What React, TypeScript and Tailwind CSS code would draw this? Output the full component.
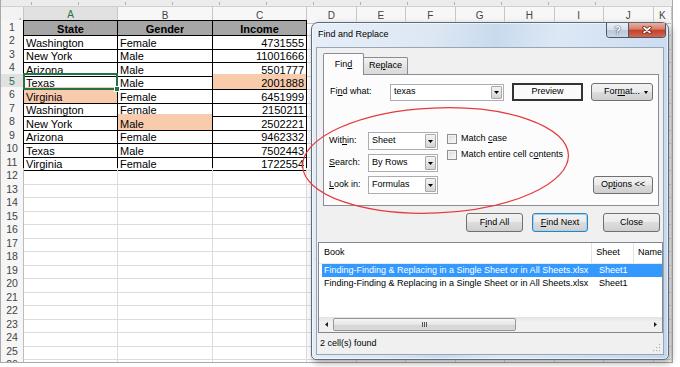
import React from "react";

const SHEET_GRID = "grid grid-cols-[23px_94px_95px_94px_repeat(7,49.5px)_1fr]";

const data: [string, string, string][] = [
  ["State", "Gender", "Income"],
  ["Washington", "Female", "4731555"],
  ["New York", "Male", "11001666"],
  ["Arizona", "Male", "5501777"],
  ["Texas", "Male", "2001888"],
  ["Virginia", "Female", "6451999"],
  ["Washington", "Female", "2150211"],
  ["New York", "Male", "2502221"],
  ["Arizona", "Female", "9462332"],
  ["Texas", "Male", "7502443"],
  ["Virginia", "Female", "1722554"],
];
const highlights = new Set(["5-2", "6-0", "8-1"]);
const colLetters = ["A", "B", "C", "D", "E", "F", "G", "H", "I", "J", "K"];

function U({ children }: { children: React.ReactNode }) {
  return <span className="underline underline-offset-1">{children}</span>;
}

function SheetRow({ r }: { r: number }) {
  const inTable = r <= 11;
  const isHead = r === 1;
  const row = inTable ? data[r - 1] : ["", "", ""];
  return (
    <div className={`${SHEET_GRID} h-[13.5px]`}>
      <div
        className={`flex items-center justify-center text-[10.5px] border-b border-b-[#d6d6d6] border-r ${
          inTable ? "border-r-black" : "border-r-[#bdbdbd]"
        } ${r === 5 ? "bg-[#e1e1e1] text-[#217346]" : "bg-[#f6f6f6] text-[#444]"}`}
      >
        {r}
      </div>
      {colLetters.map((_, c) => {
        const table = inTable && c < 3;
        const text = c < 3 ? row[c] : "";
        const hl = highlights.has(`${r}-${c}`);
        const selected = r === 5 && c === 0;
        let cls =
          "relative flex items-end leading-[12px] text-[11px] whitespace-nowrap border-r border-b " +
          (table ? "border-black " : "border-[#dcdcdc] ");
        if (isHead && c < 3) cls += "bg-[#a6a6a6] font-bold justify-center border-t border-t-black ";
        else if (c === 2 && inTable) cls += "justify-end pr-[2px] ";
        else cls += "pl-[2px] ";
        if (hl) cls += "bg-[#f8cbad] ";
        return (
          <div key={c} className={cls}>
            <span className="overflow-hidden">{text}</span>
            {selected && (
              <div className="absolute -left-px -top-px -right-px -bottom-px border-2 border-[#217346] z-10">
                <div className="absolute -right-[4px] -bottom-[4px] w-[6px] h-[6px] bg-[#217346] border border-white" />
              </div>
            )}
          </div>
        );
      })}
    </div>
  );
}

function Sheet() {
  const rows = Array.from({ length: 26 }, (_, i) => i + 1);
  return (
    <div className="w-[673px] h-[363px] overflow-hidden border-l border-r border-b border-[#a9a9a9] bg-white">
      <div className="h-[7px] bg-[#ececec] border-b border-[#d0d0d0] flex items-end gap-[46px] pl-[30px]">
        <div className="w-px h-[3px] bg-[#b0b0b0] mb-[1px]" />
        <div className="w-px h-[3px] bg-[#b0b0b0] mb-[1px]" />
        <div className="w-px h-[3px] bg-[#b0b0b0] mb-[1px]" />
        <div className="w-px h-[3px] bg-[#b0b0b0] mb-[1px]" />
        <div className="w-px h-[3px] bg-[#b0b0b0] mb-[1px]" />
        <div className="w-px h-[3px] bg-[#b0b0b0] mb-[1px]" />
        <div className="w-px h-[3px] bg-[#b0b0b0] mb-[1px]" />
        <div className="w-px h-[3px] bg-[#b0b0b0] mb-[1px]" />
        <div className="w-px h-[3px] bg-[#b0b0b0] mb-[1px]" />
        <div className="w-px h-[3px] bg-[#b0b0b0] mb-[1px]" />
        <div className="w-px h-[3px] bg-[#b0b0b0] mb-[1px]" />
        <div className="w-px h-[3px] bg-[#b0b0b0] mb-[1px]" />
        <div className="w-px h-[3px] bg-[#b0b0b0] mb-[1px]" />
      </div>
      <div className={`${SHEET_GRID} h-[12.5px]`}>
        <div className="bg-[#f3f3f3] border-r border-b border-[#c6c6c6] flex items-end justify-end pr-[2px] pb-[1px]">
          <svg width="5" height="5" viewBox="0 0 5 5">
            <path d="M5 0V5H0z" fill="#c4c4c4" />
          </svg>
        </div>
        {colLetters.map((l, i) =>
          i === 0 ? (
            <div
              key={l}
              className="flex items-center justify-center text-[10px] bg-[#e1e1e1] text-[#217346] border-r border-r-[#c6c6c6] border-b-2 border-b-[#217346]"
            >
              {l}
            </div>
          ) : (
            <div
              key={l}
              className="flex items-center justify-center text-[10px] bg-[#f7f7f7] text-[#444] border-r border-b border-[#c6c6c6]"
            >
              {l}
            </div>
          )
        )}
      </div>
      {rows.map((r) => (
        <SheetRow key={r} r={r} />
      ))}
    </div>
  );
}

function DropArrow() {
  return (
    <svg width="5" height="3" viewBox="0 0 5 3">
      <path d="M0 0h5L2.5 3z" fill="#000" />
    </svg>
  );
}

function DropBtn() {
  return (
    <div className="w-[11px] m-px flex items-center justify-center rounded-[1px] border border-[#a9a9a9] bg-[linear-gradient(#f3f3f3,#e6e6e6_50%,#d3d3d3)]">
      <DropArrow />
    </div>
  );
}

function Select({ value, className }: { value: string; className: string }) {
  return (
    <div className={`flex items-stretch border border-[#abadb3] bg-white ${className}`}>
      <div className="flex-1 flex items-center pl-[3px] text-[9px]">{value}</div>
      <DropBtn />
    </div>
  );
}

const BTN =
  "flex items-center justify-center text-[9px] rounded-[3px] border bg-[linear-gradient(#f2f2f2_0%,#ebebeb_50%,#dddddd_50%,#cfcfcf_100%)]";

function Checkbox({ children }: { children: React.ReactNode }) {
  return (
    <div className="h-[16px] flex items-center gap-[4px] text-[9px]">
      <div className="w-[10px] h-[10px] border border-[#8e8f8f] bg-[linear-gradient(135deg,#d9d9d9,#fbfbfb)] shadow-[inset_0_0_0_1px_#f2f2f2]" />
      <span>{children}</span>
    </div>
  );
}

function Dialog() {
  return (
    <div className="absolute left-[311px] top-[22px] w-[358px] h-[338px] rounded-t-[7px] rounded-b-[5px] border border-[#5d6b7c] bg-[linear-gradient(100deg,#e6eef8_0%,#dde7f3_30%,#c9daee_45%,#dde8f5_60%,#c3d7ee_100%)] shadow-[inset_0_0_0_1px_rgba(255,255,255,0.55),2px_3px_7px_rgba(0,0,0,0.35)] flex flex-col">
      {/* title bar */}
      <div className="h-[24px] relative flex items-center pl-[6px]">
        <span className="text-[9px] text-black">Find and Replace</span>
        <div className="absolute right-[2px] top-0 h-[15px] flex border border-t-0 border-[#4a596d] rounded-b-[4px] overflow-hidden">
          <div className="w-[22px] flex items-center justify-center bg-[linear-gradient(#e9eff6,#d3deea_50%,#b9c9db_51%,#c9d6e4)] border-r border-[#4a596d]">
            <span className="text-[11px] font-bold leading-none text-white [text-shadow:0_0_1px_#4d5a6a,0_0_1px_#4d5a6a,0_0_1px_#4d5a6a]">
              ?
            </span>
          </div>
          <div className="w-[36px] flex items-center justify-center bg-[linear-gradient(#eab1a3,#d67c66_45%,#c4402a_50%,#d4654c)]">
            <svg width="10" height="8" viewBox="0 0 10 8">
              <path d="M2 1.5L8 6.5M8 1.5L2 6.5" stroke="#5a1d14" strokeWidth="3.2" strokeLinecap="round" />
              <path d="M2 1.5L8 6.5M8 1.5L2 6.5" stroke="#fff" strokeWidth="1.7" strokeLinecap="round" />
            </svg>
          </div>
        </div>
      </div>
      {/* client */}
      <div className="mx-[4px] h-[308px] border border-[#97a6b7] bg-[#f0f0f0] flex flex-col">
        <div className="pt-[5px] pl-[6px] pr-[4px]">
          <div className="h-[21px] flex items-end">
            <div className="relative z-10 w-[41px] h-[22px] -mb-px bg-[#fcfcfc] border border-b-0 border-[#898c95] rounded-t-[2px] flex items-center justify-center text-[9px]">
              Fin<U>d</U>
            </div>
            <div className="w-[44px] h-[17px] border border-l-0 border-b-0 border-[#898c95] rounded-tr-[2px] bg-[linear-gradient(#f3f3f3,#e3e3e3_50%,#d9d9d9)] flex items-center justify-center text-[9px]">
              Re<U>p</U>lace
            </div>
          </div>
          <div className="h-[132px] border border-[#898c95] bg-[#fcfcfc] flex flex-col">
            {/* Find what row */}
            <div className="mt-[8px] h-[18px] flex items-center pl-[6px]">
              <div className="w-[60px] text-[9px]">
                Fi<U>n</U>d what:
              </div>
              <Select value="texas" className="w-[114px] h-[17px]" />
              <div className="ml-[8px] w-[71px] h-[18px] border-2 border-[#333] bg-[#fafafa] flex items-center justify-center text-[9px]">
                Preview
              </div>
              <div className={`${BTN} ml-[8px] w-[62px] h-[18px] border-[#707070] relative`}>
                <span>
                  For<U>m</U>at...
                </span>
                <span className="absolute right-[4px] top-[7px]">
                  <svg width="4" height="3" viewBox="0 0 4 3">
                    <path d="M0 0h4L2 3z" fill="#000" />
                  </svg>
                </span>
              </div>
            </div>
            {/* options */}
            <div className="mt-[31px] flex items-start pl-[5px] pr-[5px]">
              <div className="grid grid-cols-[39px_70px] gap-y-[4px] text-[9px]">
                <div className="h-[18px] flex items-center">
                  Wit<U>h</U>in:
                </div>
                <Select value="Sheet" className="h-[18px]" />
                <div className="h-[18px] flex items-center">
                  <U>S</U>earch:
                </div>
                <Select value="By Rows" className="h-[18px]" />
                <div className="h-[18px] flex items-center">
                  <U>L</U>ook in:
                </div>
                <Select value="Formulas" className="h-[18px]" />
              </div>
              <div className="ml-[9px] -mt-px flex flex-col">
                <Checkbox>
                  Match <U>c</U>ase
                </Checkbox>
                <Checkbox>
                  Match entire cell c<U>o</U>ntents
                </Checkbox>
              </div>
              <div className={`${BTN} ml-auto mt-[44px] w-[60px] h-[18px] border-[#707070]`}>
                Op<U>t</U>ions &lt;&lt;
              </div>
            </div>
          </div>
        </div>
        {/* action buttons */}
        <div className="mt-[7px] h-[19px] flex justify-end pr-[3px]">
          <div className={`${BTN} w-[57px] border-[#707070]`}>
            F<U>i</U>nd All
          </div>
          <div className={`${BTN} ml-[9px] w-[56px] border-[#3c7fb1] shadow-[inset_0_0_0_1px_#9fd3f3]`}>
            <U>F</U>ind Next
          </div>
          <div className={`${BTN} ml-[15px] w-[57px] border-[#707070]`}>Close</div>
        </div>
        {/* results list */}
        <div className="mt-[10px] ml-px h-[91px] border border-[#828790] bg-white flex flex-col overflow-hidden">
          <div className="h-[21px] flex items-center text-[9px] border-b border-[#eaeaea] bg-white">
            <div className="w-[276px] h-full flex items-center pl-[5px] border-r border-[#e3e3e3]">Book</div>
            <div className="w-[42px] h-full flex items-center pl-[4px] border-r border-[#e3e3e3]">Sheet</div>
            <div className="h-full flex items-center pl-[4px] whitespace-nowrap">Name</div>
          </div>
          <div className="flex-1 pl-[3px] text-[9px]">
            <div className="h-[13px] flex items-center bg-[#3399ff] text-white whitespace-nowrap">
              <div className="w-[273px] pl-[2px]">Finding-Finding &amp; Replacing in a Single Sheet or in All Sheets.xlsx</div>
              <div className="pl-[4px]">Sheet1</div>
            </div>
            <div className="h-[13px] flex items-center text-black whitespace-nowrap">
              <div className="w-[273px] pl-[2px]">Finding-Finding &amp; Replacing in a Single Sheet or in All Sheets.xlsx</div>
              <div className="pl-[4px]">Sheet1</div>
            </div>
          </div>
          <div className="h-[15px] flex items-stretch bg-[linear-gradient(#e2e2e2,#f0f0f0_30%,#f0f0f0)]">
            <div className="w-[14px] flex items-center justify-center">
              <svg width="3" height="5" viewBox="0 0 3 5">
                <path d="M3 0V5L0 2.5z" fill="#222" />
              </svg>
            </div>
            <div className="w-[183px] my-px rounded-[2px] border border-[#979797] bg-[linear-gradient(#f5f5f5,#e6e6e6_50%,#d6d6d6_51%,#d9d9d9)] flex items-center justify-center">
              <svg width="6" height="5" viewBox="0 0 6 5">
                <path d="M0.5 0V5M2.5 0V5M4.5 0V5" stroke="#555" strokeWidth="1" />
              </svg>
            </div>
            <div className="flex-1" />
            <div className="w-[14px] flex items-center justify-center">
              <svg width="3" height="5" viewBox="0 0 3 5">
                <path d="M0 0V5L3 2.5z" fill="#222" />
              </svg>
            </div>
          </div>
        </div>
        {/* status bar */}
        <div className="h-[21px] flex items-center justify-between pl-[3px] pr-[2px] text-[9px] bg-[#f0f0f0]">
          <span>2 cell(s) found</span>
          <svg width="8" height="8" viewBox="0 0 8 8" className="self-end mb-[2px]">
            <g fill="#b5b5b5">
              <rect x="6" y="0" width="1.2" height="1.2" />
              <rect x="3" y="3" width="1.2" height="1.2" />
              <rect x="6" y="3" width="1.2" height="1.2" />
              <rect x="0" y="6" width="1.2" height="1.2" />
              <rect x="3" y="6" width="1.2" height="1.2" />
              <rect x="6" y="6" width="1.2" height="1.2" />
            </g>
          </svg>
        </div>
      </div>
    </div>
  );
}

export default function App() {
  return (
    <div className="relative w-[680px] h-[367px] bg-white overflow-hidden font-['Liberation_Sans',Arial,sans-serif] text-black">
      <Sheet />
      <Dialog />
      <svg className="absolute left-0 top-0 pointer-events-none" width="680" height="367" viewBox="0 0 680 367">
        <ellipse
          cx="435.5"
          cy="160.5"
          rx="133"
          ry="52.5"
          transform="rotate(-2.5 435.5 160.5)"
          fill="none"
          stroke="#e6393c"
          strokeWidth="1.2"
        />
      </svg>
    </div>
  );
}
